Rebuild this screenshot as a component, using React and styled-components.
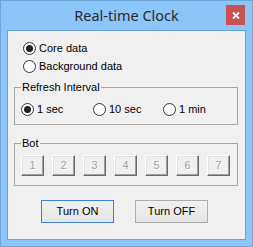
import React from "react";
import styled, { createGlobalStyle } from "styled-components";

const Global = createGlobalStyle`
  html, body { margin: 0; padding: 0; background: #8cc6f8; }
  * { box-sizing: border-box; }
`;

const Window = styled.div`
  width: 253px;
  height: 247px;
  background: #8cc6f8;
  border: 1px solid #6fa6dc;
  display: flex;
  flex-direction: column;
  padding: 0 6px 6px 6px;
  font-family: "Liberation Sans", Arial, sans-serif;
  font-size: 11px;
  color: #000;
`;

const TitleBar = styled.div`
  height: 29px;
  display: grid;
  grid-template-columns: 1fr auto 1fr;
  align-items: start;
`;

const Title = styled.div`
  grid-column: 2;
  font-family: "Noto Sans", "Open Sans", sans-serif;
  font-size: 14.5px;
  color: #2b2b2b;
  line-height: 20px;
  margin-top: 4px;
  white-space: nowrap;
`;

const CloseButton = styled.div`
  grid-column: 3;
  justify-self: end;
  width: 19px;
  height: 20px;
  margin-top: 4px;
  margin-right: 1px;
  background: #c75050;
  color: #fff;
  display: flex;
  align-items: center;
  justify-content: center;
`;

const Client = styled.div`
  flex: 1;
  background: #f0f0f0;
  border: 1px solid #6d9fd2;
  display: flex;
  flex-direction: column;
`;

const RadioStack = styled.div`
  display: flex;
  flex-direction: column;
  gap: 5px;
  margin: 11px 0 0 15px;
`;

const RadioRow = styled.label`
  display: flex;
  align-items: center;
  gap: 3px;
  height: 13px;
  line-height: 13px;
  white-space: nowrap;
  width: ${(p) => (p.$w ? `${p.$w}px` : "auto")};
`;

const RadioCircle = styled.span`
  width: 13px;
  height: 13px;
  border-radius: 50%;
  border: 1px solid #333;
  background: #fff;
  display: flex;
  align-items: center;
  justify-content: center;
  flex: none;
  &::after {
    content: "";
    width: 7px;
    height: 7px;
    border-radius: 50%;
    background: ${(p) => (p.$on ? "#222" : "transparent")};
  }
`;

const Group = styled.div`
  position: relative;
  border: 1px solid #a6a6a6;
  margin: ${(p) => p.$mt}px 7px 0 6px;
  padding: ${(p) => p.$pt}px 0 ${(p) => p.$pb}px 6px;
  display: flex;
  gap: ${(p) => p.$gap || 0}px;
`;

const Legend = styled.span`
  position: absolute;
  top: -7px;
  left: 6px;
  padding: 0 1px;
  background: #f0f0f0;
  line-height: 13px;
  white-space: nowrap;
`;

const BotButton = styled.div`
  width: 23px;
  height: 21px;
  background: #f0f0f0;
  border-top: 1px solid #fff;
  border-left: 1px solid #fff;
  border-right: 1px solid #6a6a6a;
  border-bottom: 1px solid #6a6a6a;
  box-shadow: inset -1px -1px 0 #a0a0a0, inset 1px 1px 0 #e3e3e3;
  color: #a0a0a0;
  text-shadow: 1px 1px 0 #fff;
  display: flex;
  align-items: center;
  justify-content: center;
  line-height: 13px;
`;

const ButtonRow = styled.div`
  display: flex;
  gap: 21px;
  margin: 14px 0 0 33px;
`;

const PushButton = styled.div`
  width: 73px;
  height: 23px;
  border: 1px solid ${(p) => (p.$focus ? "#3c7fd8" : "#acacac")};
  background: linear-gradient(#f0f0f0, #e5e5e5);
  display: flex;
  align-items: center;
  justify-content: center;
  line-height: 13px;
  color: #000;
`;

function Radio({ on, children, w }) {
  return (
    <RadioRow $w={w}>
      <RadioCircle $on={on} />
      <span>{children}</span>
    </RadioRow>
  );
}

export default function App() {
  return (
    <>
      <Global />
      <Window>
        <TitleBar>
          <Title>Real-time Clock</Title>
          <CloseButton>
            <svg width="8" height="7" viewBox="0 0 8 7">
              <path d="M1 0.5 L7 6.5 M7 0.5 L1 6.5" stroke="#fff" strokeWidth="1.8" />
            </svg>
          </CloseButton>
        </TitleBar>
        <Client>
          <RadioStack>
            <Radio on>Core data</Radio>
            <Radio>Background data</Radio>
          </RadioStack>
          <Group $mt={14} $pt={15} $pb={8}>
            <Legend>Refresh Interval</Legend>
            <Radio on w={72}>1 sec</Radio>
            <Radio w={70}>10 sec</Radio>
            <Radio>1 min</Radio>
          </Group>
          <Group $mt={18} $pt={11} $pb={9} $gap={8}>
            <Legend>Bot</Legend>
            {[1, 2, 3, 4, 5, 6, 7].map((n) => (
              <BotButton key={n}>{n}</BotButton>
            ))}
          </Group>
          <ButtonRow>
            <PushButton $focus>Turn ON</PushButton>
            <PushButton>Turn OFF</PushButton>
          </ButtonRow>
        </Client>
      </Window>
    </>
  );
}
